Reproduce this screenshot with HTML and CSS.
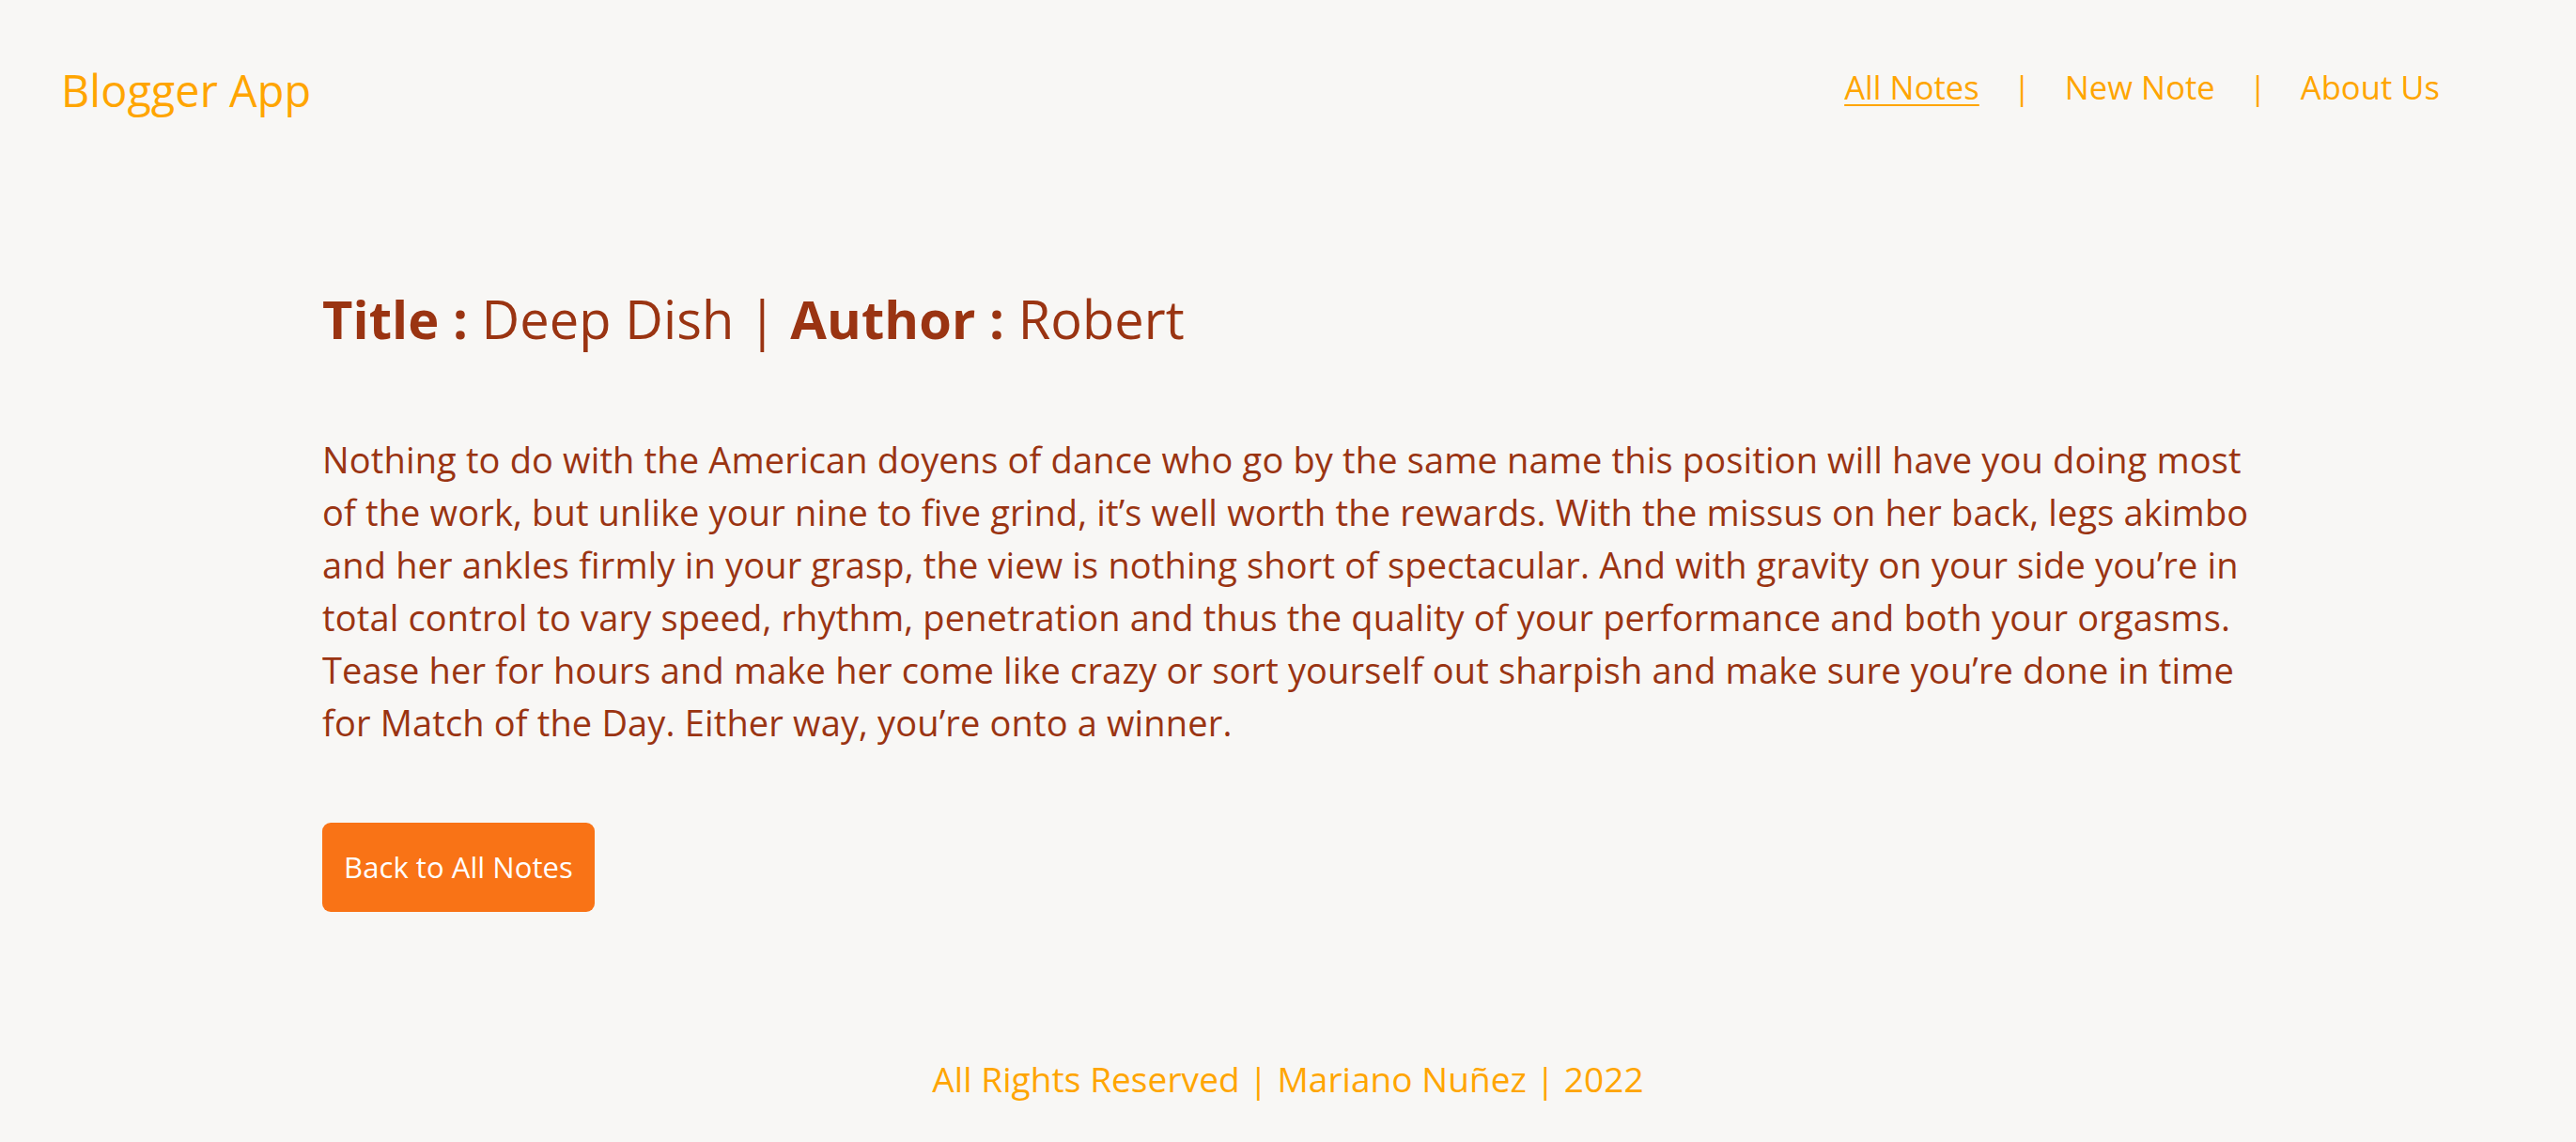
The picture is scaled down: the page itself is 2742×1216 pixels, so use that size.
FILE: index.html
```html
<!DOCTYPE html>
<html lang="en">
<head>
<meta charset="utf-8">
<title>Blogger App</title>
<link rel="stylesheet" href="styles.css">
</head>
<body>
<header class="header">
  <div class="logo">Blogger App</div>
  <nav class="nav">
    <a class="nav-link active" href="#">All Notes</a>
    <span class="nav-sep">|</span>
    <a class="nav-link" href="#">New Note</a>
    <span class="nav-sep">|</span>
    <a class="nav-link" href="#">About Us</a>
  </nav>
</header>
<main class="content">
  <h1 class="note-title"><strong>Title :</strong> Deep Dish | <strong>Author :</strong> Robert</h1>
  <p class="note-body">Nothing to do with the American doyens of dance who go by the same name this position will have you doing most of the work, but unlike your nine to five grind, it’s well worth the rewards. With the missus on her back, legs akimbo and her ankles firmly in your grasp, the view is nothing short of spectacular. And with gravity on your side you’re in total control to vary speed, rhythm, penetration and thus the quality of your performance and both your orgasms. Tease her for hours and make her come like crazy or sort yourself out sharpish and make sure you’re done in time for Match of the Day. Either way, you’re onto a winner.</p>
  <a class="back-btn" href="#">Back to All Notes</a>
</main>
<footer class="footer">All Rights Reserved | Mariano Nuñez | 2022</footer>
</body>
</html>
```
FILE: styles.css
```css
* { box-sizing: border-box; }
html, body { margin: 0; padding: 0; }
body {
  background: #f8f7f5;
  font-family: "Open Sans", "Noto Sans", sans-serif;
  min-height: 1216px;
  letter-spacing: 0.004em;
}
.header {
  display: flex;
  justify-content: space-between;
  align-items: flex-start;
  padding: 64px 145px 0 65px;
}
.logo {
  color: #ffa500;
  font-size: 46.8px;
  line-height: 64px;
}
.nav {
  display: flex;
  align-items: center;
  gap: 36px;
  padding-top: 5px;
  font-size: 34.5px;
  line-height: 48px;
  color: #ffa500;
}
.nav-link {
  color: #ffa500;
  text-decoration: none;
}
.nav-link.active {
  text-decoration: underline;
  text-decoration-thickness: 2px;
  text-underline-offset: 5px;
}
.nav-sep { color: #ffa500; }
.content {
  padding: 171px 329px 0 343px;
  color: #9a3412;
}
.note-title {
  margin: 0;
  font-size: 56px;
  line-height: 80px;
  font-weight: 400;
}
.note-title strong { font-weight: 700; }
.note-body {
  margin: 82px 0 0;
  font-size: 38px;
  line-height: 56px;
  letter-spacing: 0.15px;
}
.back-btn {
  display: inline-block;
  margin-top: 79px;
  width: 290px;
  height: 95px;
  line-height: 95px;
  text-align: center;
  background: #f97316;
  color: #fff;
  border-radius: 9px;
  font-size: 31px;
  text-decoration: none;
}
.footer {
  padding-top: 150px;
  text-align: center;
  color: #ffa500;
  font-size: 37px;
  line-height: 56px;
}
```
